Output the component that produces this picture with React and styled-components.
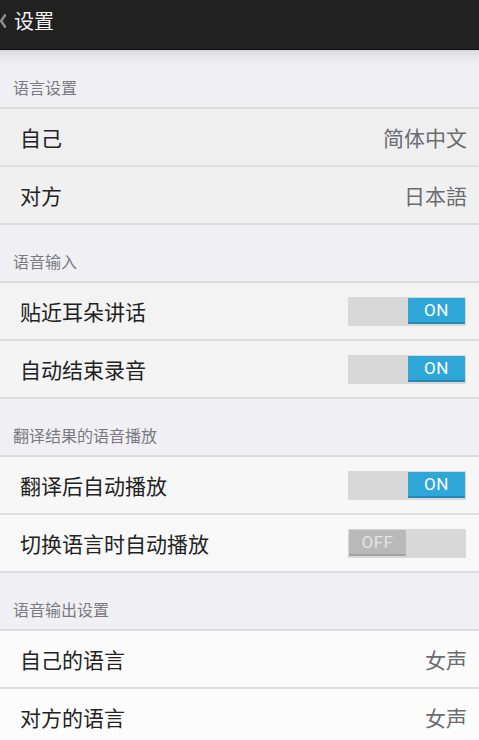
import React from "react";
import styled, { createGlobalStyle } from "styled-components";

const Global = createGlobalStyle`
  html, body { margin: 0; padding: 0; background: #efeff4; }
  body { font-family: "Noto Sans CJK SC", "Noto Sans", sans-serif; }
`;

const Page = styled.div`
  width: 479px;
  height: 740px;
  overflow: hidden;
  background: #efeff4;
`;

const AppBar = styled.div`
  height: 50px;
  box-sizing: border-box;
  background: #212121;
  border-bottom: 1px solid #0c0c0c;
  display: flex;
  align-items: center;
  gap: 8px;
`;

const BackIcon = styled.svg`
  width: 6px;
  height: 14px;
  margin-top: -7px;
  flex: none;
`;

const Title = styled.span`
  color: #f4f4f4;
  font-size: 20px;
  line-height: 1;
  margin-top: -7px;
`;

const SectionHeader = styled.div`
  height: ${(p) => (p.$first ? 59 : 58)}px;
  box-sizing: border-box;
  display: flex;
  align-items: flex-end;
  padding: 0 0 8px 13px;
  font-size: 16px;
  color: #7a7a80;
  background: ${(p) =>
    p.$first
      ? "linear-gradient(#d8d8dc 0px, #e9e9ed 7px, #efeff4 16px)"
      : "#efeff4"};
  border-bottom: 2px solid #dcdcdc;
`;

const Row = styled.div`
  height: 58px;
  box-sizing: border-box;
  display: flex;
  align-items: center;
  justify-content: space-between;
  padding: 0 12px 0 20px;
  background: ${(p) => p.$bg};
  border-bottom: 2px solid #dedede;
`;

const Label = styled.span`
  font-size: 21px;
  color: #222;
`;

const Value = styled.span`
  font-size: 21px;
  color: #6b6b72;
`;

const Track = styled.div`
  width: 118px;
  height: 29px;
  box-sizing: border-box;
  background: #d8d8d8;
  padding: 1px;
  display: flex;
  justify-content: ${(p) => (p.$on ? "flex-end" : "flex-start")};
  margin-right: 1px;
`;

const Knob = styled.div`
  width: 57px;
  height: 26px;
  box-sizing: border-box;
  display: flex;
  align-items: center;
  justify-content: center;
  font-family: Roboto, "Noto Sans", sans-serif;
  font-size: 17px;
  letter-spacing: 0.5px;
  background: ${(p) => (p.$on ? "#2ea6d8" : "#b9b9b9")};
  color: ${(p) => (p.$on ? "#ffffff" : "#e4e4e4")};
  border-bottom: 2px solid ${(p) => (p.$on ? "#2388b3" : "#a2a2a2")};
  border-radius: 1px;
`;

const Toggle = ({ on }) => (
  <Track $on={on}>
    <Knob $on={on}>{on ? "ON" : "OFF"}</Knob>
  </Track>
);

const sections = [
  {
    title: "语言设置",
    rows: [
      { label: "自己", value: "简体中文", bg: "#efefef" },
      { label: "对方", value: "日本語", bg: "#f0f0f0" },
    ],
  },
  {
    title: "语音输入",
    rows: [
      { label: "贴近耳朵讲话", on: true, bg: "#f3f3f3" },
      { label: "自动结束录音", on: true, bg: "#f4f4f4" },
    ],
  },
  {
    title: "翻译结果的语音播放",
    rows: [
      { label: "翻译后自动播放", on: true, bg: "#f7f7f7" },
      { label: "切换语言时自动播放", on: false, bg: "#f8f8f8" },
    ],
  },
  {
    title: "语音输出设置",
    rows: [
      { label: "自己的语言", value: "女声", bg: "#fbfbfb" },
      { label: "对方的语言", value: "女声", bg: "#fcfcfc" },
    ],
  },
];

const Group = styled.div``;

export default function App() {
  return (
    <Page>
      <Global />
      <AppBar>
        <BackIcon viewBox="0 0 6 14">
          <path d="M6 0 L1 7 L6 14" fill="none" stroke="#8c8c8c" strokeWidth="2.6" />
        </BackIcon>
        <Title>设置</Title>
      </AppBar>
      {sections.map((s, i) => (
        <Group key={s.title}>
          <SectionHeader $first={i === 0}>{s.title}</SectionHeader>
          {s.rows.map((r) => (
            <Row key={r.label} $bg={r.bg}>
              <Label>{r.label}</Label>
              {r.value !== undefined ? <Value>{r.value}</Value> : <Toggle on={r.on} />}
            </Row>
          ))}
        </Group>
      ))}
    </Page>
  );
}
